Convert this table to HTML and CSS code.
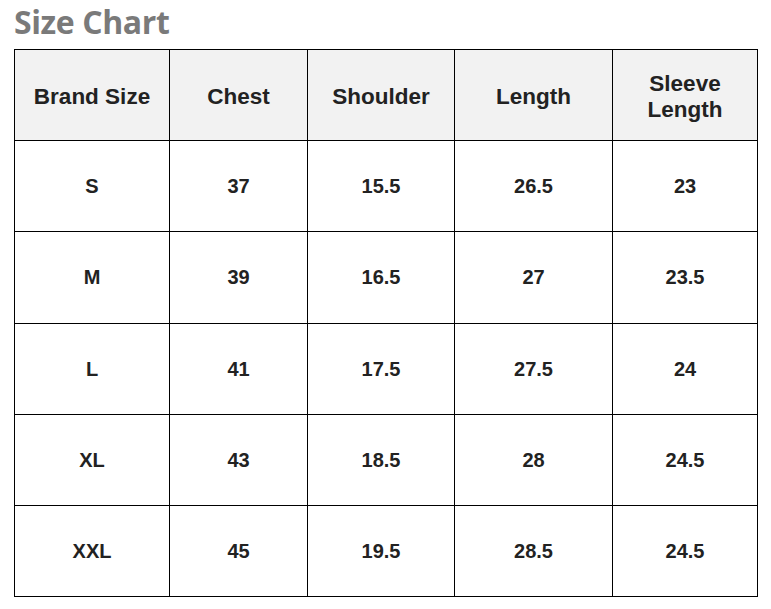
FILE: index.html
```html
<!DOCTYPE html>
<html>
<head>
<meta charset="utf-8">
<link rel="stylesheet" href="styles.css">
</head>
<body>
<div class="page">
  <h1 class="title">Size Chart</h1>
  <table class="chart">
    <colgroup>
      <col class="c1"><col class="c2"><col class="c3"><col class="c4"><col class="c5">
    </colgroup>
    <thead>
      <tr><th>Brand Size</th><th>Chest</th><th>Shoulder</th><th>Length</th><th>Sleeve<br>Length</th></tr>
    </thead>
    <tbody>
      <tr><td>S</td><td>37</td><td>15.5</td><td>26.5</td><td>23</td></tr>
      <tr><td>M</td><td>39</td><td>16.5</td><td>27</td><td>23.5</td></tr>
      <tr><td>L</td><td>41</td><td>17.5</td><td>27.5</td><td>24</td></tr>
      <tr><td>XL</td><td>43</td><td>18.5</td><td>28</td><td>24.5</td></tr>
      <tr><td>XXL</td><td>45</td><td>19.5</td><td>28.5</td><td>24.5</td></tr>
    </tbody>
  </table>
</div>
</body>
</html>
```
FILE: styles.css
```css
html, body {
  margin: 0;
  padding: 0;
  background: #fff;
}
.page {
  padding: 0 0 0 14px;
}
.title {
  margin: 0;
  height: 49px;
  font-family: "Open Sans", sans-serif;
  font-weight: 700;
  font-size: 32px;
  line-height: 44px;
  color: #7a7a7a;
  letter-spacing: -0.4px;
}
.chart {
  border-collapse: collapse;
  width: 743px;
  table-layout: fixed;
  font-family: "Liberation Sans", Arial, sans-serif;
  font-weight: 700;
  color: #222;
}
.c1 { width: 155px; }
.c2 { width: 138px; }
.c3 { width: 147px; }
.c4 { width: 158px; }
.c5 { width: 145px; }
.chart th, .chart td {
  border: 1px solid #000;
  text-align: center;
  vertical-align: middle;
  padding: 0;
  box-sizing: border-box;
}
.chart th {
  background: #f2f2f2;
  font-size: 22.5px;
  line-height: 26px;
  height: 91px;
  padding-top: 3px;
}
.chart td {
  font-size: 20px;
  height: 91.3px;
  padding-top: 1px;
}
```
